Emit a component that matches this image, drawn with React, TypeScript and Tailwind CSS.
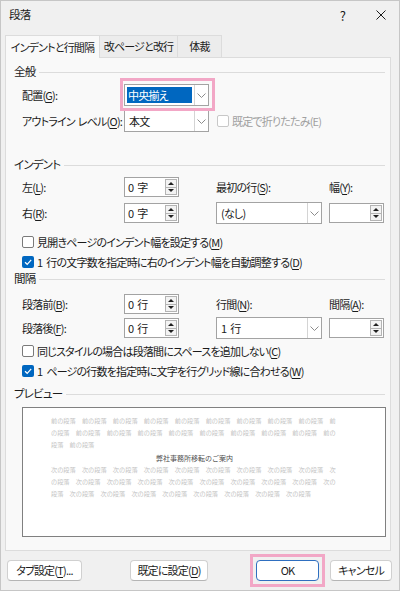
import React from 'react'

function U({ c }: { c: string }) {
  return <span className="underline decoration-[1px] underline-offset-[2px]">{c}</span>
}

// digit followed by a visible gap, e.g. "0 字"
function Gap({ children }: { children: React.ReactNode }) {
  return <span className="mr-[4px]">{children}</span>
}

function Chevron() {
  return (
    <svg viewBox="0 0 9 5" className="h-[5px] w-[9px]" fill="none" stroke="#8c8c8c" strokeWidth="1">
      <path d="M0.5 0.5 L4.5 4.5 L8.5 0.5" />
    </svg>
  )
}

function Dropdown({ value, w, selected }: { value: React.ReactNode; w: string; selected?: boolean }) {
  return (
    <div className={`flex h-[22px] ${w} border border-[#a3a3a3] bg-white`}>
      <div className="flex flex-1 items-center px-[2px]">
        {selected ? (
          <span className="flex h-[16px] w-full items-center bg-[#0067c0] px-[1px] text-white">{value}</span>
        ) : (
          <span className="px-[2px]">{value}</span>
        )}
      </div>
      <div className="flex w-[14px] items-center justify-center border-l border-[#d4d4d4]">
        <Chevron />
      </div>
    </div>
  )
}

function Spinner({ value }: { value?: React.ReactNode }) {
  return (
    <div className="flex h-[20px] w-[55px] border border-[#a3a3a3] bg-white">
      <div className="flex flex-1 items-center pl-[3px]">{value}</div>
      <div className="my-[1px] mr-[1px] flex w-[12px] flex-col border border-[#b4b4b4] bg-[#f3f3f3]">
        <div className="flex flex-1 items-center justify-center border-b border-[#b4b4b4]">
          <svg viewBox="0 0 6 3" className="h-[3px] w-[6px]">
            <path d="M0 3 L3 0 L6 3 Z" fill="#202020" />
          </svg>
        </div>
        <div className="flex flex-1 items-center justify-center">
          <svg viewBox="0 0 6 3" className="h-[3px] w-[6px]">
            <path d="M0 0 L3 3 L6 0 Z" fill="#202020" />
          </svg>
        </div>
      </div>
    </div>
  )
}

function Checkbox({ checked, disabled, children }: { checked?: boolean; disabled?: boolean; children: React.ReactNode }) {
  return (
    <div className={`flex h-[20px] items-center gap-[3px] whitespace-nowrap ${disabled ? 'text-[#a0a0a0]' : ''}`}>
      {checked ? (
        <span className="flex h-[12px] w-[12px] items-center justify-center rounded-[2px] bg-[#0067c0]">
          <svg viewBox="0 0 12 12" className="h-[12px] w-[12px]" fill="none" stroke="white" strokeWidth="1.2">
            <path d="M3 6.2 L5.2 8.3 L9.2 3.8" />
          </svg>
        </span>
      ) : (
        <span className={`h-[12px] w-[12px] rounded-[2px] border bg-white ${disabled ? 'border-[#c8c8c8]' : 'border-[#7a7a7a]'}`} />
      )}
      <span>{children}</span>
    </div>
  )
}

function Heading({ label, mt }: { label: string; mt: string }) {
  return (
    <div className={`flex h-[14px] items-center gap-[4px] pl-[8px] pr-[5px] ${mt}`}>
      <span className="text-[11.5px]">{label}</span>
      <span className="h-px flex-1 bg-[#dcdcdc]" />
    </div>
  )
}

function Button({ children, w }: { children: React.ReactNode; w: string }) {
  return (
    <div className={`flex h-[21px] ${w} items-center justify-center whitespace-nowrap rounded-[4px] border border-[#d0d0d0] border-b-[#b5b5b5] bg-white`}>
      {children}
    </div>
  )
}

const prevLines = [
  '前の段落　前の段落　前の段落　前の段落　前の段落　前の段落　前の段落　前の段落　前の段落　前',
  'の段落　前の段落　前の段落　前の段落　前の段落　前の段落　前の段落　前の段落　前の段落　前の',
  '段落　前の段落',
]
const nextLines = [
  '次の段落　次の段落　次の段落　次の段落　次の段落　次の段落　次の段落　次の段落　次の段落　次',
  'の段落　次の段落　次の段落　次の段落　次の段落　次の段落　次の段落　次の段落　次の段落　次の',
  '段落　次の段落　次の段落　次の段落　次の段落　次の段落　次の段落　次の段落　次の段落',
]

export default function App() {
  return (
    <div className="flex h-[591px] w-[400px] flex-col overflow-hidden border border-[#c6c6c6] bg-[#f0f0f0] font-['Noto_Sans_CJK_JP',sans-serif] text-[11px] leading-none tracking-[-0.8px] text-[#1b1b1b] [font-feature-settings:'palt'_1] [font-variant-east-asian:proportional-width]">
      <div className="flex h-[28px] items-center pl-[8px]">
        <span className="text-[11.5px]">段落</span>
        <span className="ml-auto mr-[31px] text-[13px]">?</span>
        <svg viewBox="0 0 10 10" className="mr-[13px] h-[10px] w-[10px]" fill="none" stroke="#1b1b1b" strokeWidth="1">
          <path d="M0.5 0.5 L9.5 9.5 M9.5 0.5 L0.5 9.5" />
        </svg>
      </div>

      <div className="ml-[4px] mt-[6px] flex h-[22px] whitespace-nowrap">
        <div className="z-10 -mb-px flex w-[95px] items-center justify-center border border-b-0 border-[#dcdcdc] bg-[#f9f9f9]">
          インデントと行間隔
        </div>
        <div className="flex w-[78px] items-center justify-center border-r border-t border-[#dcdcdc] bg-[#ececec]">
          改ページと改行
        </div>
        <div className="flex w-[44px] items-center justify-center border-r border-t border-[#dcdcdc] bg-[#ececec]">
          体裁
        </div>
      </div>

      <div className="ml-[4px] flex h-[494px] w-[386px] flex-col border border-[#dcdcdc] bg-[#f9f9f9]">
        <Heading label="全般" mt="mt-[7px]" />

        <div className="mt-[5px] flex h-[22px] items-center pl-[16px]">
          <span className="w-[102px]">
            配置(<U c="G" />):
          </span>
          <div className="relative">
            <Dropdown value="中央揃え" w="w-[85px]" selected />
            <div className="pointer-events-none absolute -bottom-[5px] -left-[4px] -right-[6px] -top-[6px] border-[3px] border-[#f2a7c6]" />
          </div>
        </div>

        <div className="mt-[4px] flex h-[22px] items-center pl-[16px]">
          <span className="w-[102px] whitespace-nowrap">
            <span className="mr-[3px]">アウトライン</span>レベル(<U c="O" />):
          </span>
          <Dropdown value="本文" w="w-[85px]" />
          <div className="ml-[8px]">
            <Checkbox disabled>既定で折りたたみ(E)</Checkbox>
          </div>
        </div>

        <Heading label="インデント" mt="mt-[26px]" />

        <div className="mt-[5px] flex h-[20px] items-center pl-[16px]">
          <span className="w-[102px]">
            左(<U c="L" />):
          </span>
          <div className="w-[92px]">
            <Spinner value={<><Gap>0</Gap>字</>} />
          </div>
          <span className="w-[113px]">
            最初の行(<U c="S" />):
          </span>
          <span>
            幅(<U c="Y" />):
          </span>
        </div>

        <div className="mt-[6px] flex h-[20px] items-center pl-[16px]">
          <span className="w-[102px]">
            右(<U c="R" />):
          </span>
          <div className="w-[92px]">
            <Spinner value={<><Gap>0</Gap>字</>} />
          </div>
          <div className="w-[113px]">
            <Dropdown value="(なし)" w="w-[106px] h-[20px]" />
          </div>
          <Spinner />
        </div>

        <div className="mt-[9px] pl-[16px]">
          <Checkbox>
            見開きページのインデント幅を設定する(<U c="M" />)
          </Checkbox>
          <Checkbox checked>
            <Gap>1</Gap>行の文字数を指定時に右のインデント幅を自動調整する(<U c="D" />)
          </Checkbox>
        </div>

        <Heading label="間隔" mt="mt-0" />

        <div className="mt-[8px] flex h-[20px] items-center pl-[16px]">
          <span className="w-[102px]">
            段落前(<U c="B" />):
          </span>
          <div className="w-[92px]">
            <Spinner value={<><Gap>0</Gap>行</>} />
          </div>
          <span className="w-[113px]">
            行間(<U c="N" />):
          </span>
          <span>
            間隔(<U c="A" />):
          </span>
        </div>

        <div className="mt-[4px] flex h-[20px] items-center pl-[16px]">
          <span className="w-[102px]">
            段落後(<U c="F" />):
          </span>
          <div className="w-[92px]">
            <Spinner value={<><Gap>0</Gap>行</>} />
          </div>
          <div className="w-[113px]">
            <Dropdown value={<><Gap>1</Gap>行</>} w="w-[106px] h-[20px]" />
          </div>
          <Spinner />
        </div>

        <div className="mt-[3px] pl-[16px]">
          <Checkbox>
            同じスタイルの場合は段落間にスペースを追加しない(<U c="C" />)
          </Checkbox>
          <Checkbox checked>
            <Gap>1</Gap>ページの行数を指定時に文字を行グリッド線に合わせる(<U c="W" />)
          </Checkbox>
        </div>

        <Heading label="プレビュー" mt="mt-[6px]" />

        <div className="ml-[16px] mt-[6px] h-[130px] w-[364px] border border-[#808080] bg-white pl-[28px] pt-[7px] text-[6.2px] leading-[12.2px] tracking-normal text-[#c4c4c4] [font-feature-settings:normal] [font-variant-east-asian:normal]">
          {prevLines.map((l) => (
            <div key={l} className="whitespace-nowrap">
              {l}
            </div>
          ))}
          <div className="w-[287px] text-center text-[7px] text-[#505050]">弊社事務所移転のご案内</div>
          {nextLines.map((l) => (
            <div key={l} className="whitespace-nowrap">
              {l}
            </div>
          ))}
        </div>
      </div>

      <div className="mt-[9px] flex h-[21px] items-center pl-[6px]">
        <Button w="w-[75px]">
          タブ設定(<U c="T" />)...
        </Button>
        <div className="ml-[48px]">
          <Button w="w-[78px]">
            既定に設定(<U c="D" />)
          </Button>
        </div>
        <div className="relative ml-[48px]">
          <div className="flex h-[21px] w-[63px] items-center justify-center rounded-[4px] border border-[#2f6fc0] bg-white">
            OK
          </div>
          <div className="pointer-events-none absolute -bottom-[6px] -left-[6px] -right-[6px] -top-[6px] border-[3px] border-[#f2a7c6]" />
        </div>
        <div className="ml-[11px]">
          <Button w="w-[62px]">キャンセル</Button>
        </div>
      </div>
    </div>
  )
}
